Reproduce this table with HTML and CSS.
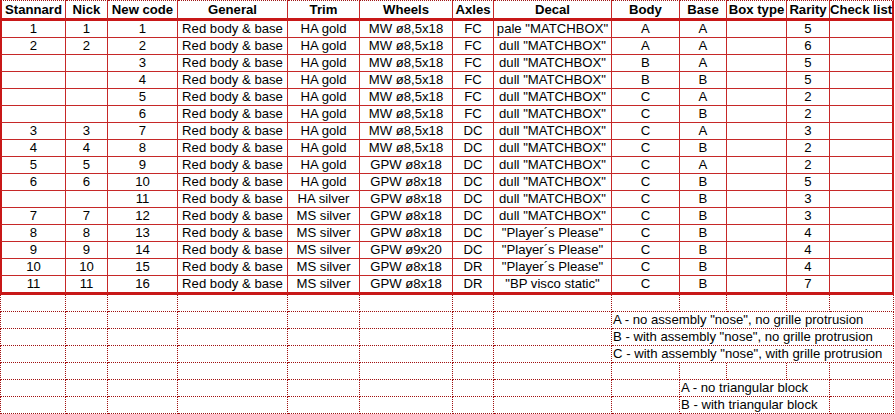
FILE: index.html
```html
<!DOCTYPE html>
<html>
<head>
<meta charset="utf-8">
<link rel="stylesheet" href="styles.css">
</head>
<body>
<table class="sheet">
<colgroup>
<col class="c1"><col class="c2"><col class="c3"><col class="c4"><col class="c5"><col class="c6"><col class="c7"><col class="c8"><col class="c9"><col class="c10"><col class="c11"><col class="c12"><col class="c13">
</colgroup>
<thead>
<tr class="head">
<th>Stannard</th><th>Nick</th><th>New code</th><th>General</th><th>Trim</th><th>Wheels</th><th>Axles</th><th>Decal</th><th>Body</th><th>Base</th><th>Box type</th><th>Rarity</th><th>Check list</th>
</tr>
</thead>
<tbody class="main">
<tr><td>1</td><td>1</td><td>1</td><td>Red body &amp; base</td><td>HA gold</td><td>MW ø8,5x18</td><td>FC</td><td>pale "MATCHBOX"</td><td>A</td><td>A</td><td></td><td>5</td><td></td></tr>
<tr><td>2</td><td>2</td><td>2</td><td>Red body &amp; base</td><td>HA gold</td><td>MW ø8,5x18</td><td>FC</td><td>dull "MATCHBOX"</td><td>A</td><td>A</td><td></td><td>6</td><td></td></tr>
<tr><td></td><td></td><td>3</td><td>Red body &amp; base</td><td>HA gold</td><td>MW ø8,5x18</td><td>FC</td><td>dull "MATCHBOX"</td><td>B</td><td>A</td><td></td><td>5</td><td></td></tr>
<tr><td></td><td></td><td>4</td><td>Red body &amp; base</td><td>HA gold</td><td>MW ø8,5x18</td><td>FC</td><td>dull "MATCHBOX"</td><td>B</td><td>B</td><td></td><td>5</td><td></td></tr>
<tr><td></td><td></td><td>5</td><td>Red body &amp; base</td><td>HA gold</td><td>MW ø8,5x18</td><td>FC</td><td>dull "MATCHBOX"</td><td>C</td><td>A</td><td></td><td>2</td><td></td></tr>
<tr><td></td><td></td><td>6</td><td>Red body &amp; base</td><td>HA gold</td><td>MW ø8,5x18</td><td>FC</td><td>dull "MATCHBOX"</td><td>C</td><td>B</td><td></td><td>2</td><td></td></tr>
<tr><td>3</td><td>3</td><td>7</td><td>Red body &amp; base</td><td>HA gold</td><td>MW ø8,5x18</td><td>DC</td><td>dull "MATCHBOX"</td><td>C</td><td>A</td><td></td><td>3</td><td></td></tr>
<tr><td>4</td><td>4</td><td>8</td><td>Red body &amp; base</td><td>HA gold</td><td>MW ø8,5x18</td><td>DC</td><td>dull "MATCHBOX"</td><td>C</td><td>B</td><td></td><td>2</td><td></td></tr>
<tr><td>5</td><td>5</td><td>9</td><td>Red body &amp; base</td><td>HA gold</td><td>GPW ø8x18</td><td>DC</td><td>dull "MATCHBOX"</td><td>C</td><td>A</td><td></td><td>2</td><td></td></tr>
<tr><td>6</td><td>6</td><td>10</td><td>Red body &amp; base</td><td>HA gold</td><td>GPW ø8x18</td><td>DC</td><td>dull "MATCHBOX"</td><td>C</td><td>B</td><td></td><td>5</td><td></td></tr>
<tr><td></td><td></td><td>11</td><td>Red body &amp; base</td><td>HA silver</td><td>GPW ø8x18</td><td>DC</td><td>dull "MATCHBOX"</td><td>C</td><td>B</td><td></td><td>3</td><td></td></tr>
<tr><td>7</td><td>7</td><td>12</td><td>Red body &amp; base</td><td>MS silver</td><td>GPW ø8x18</td><td>DC</td><td>dull "MATCHBOX"</td><td>C</td><td>B</td><td></td><td>3</td><td></td></tr>
<tr><td>8</td><td>8</td><td>13</td><td>Red body &amp; base</td><td>MS silver</td><td>GPW ø8x18</td><td>DC</td><td>"Player´s Please"</td><td>C</td><td>B</td><td></td><td>4</td><td></td></tr>
<tr><td>9</td><td>9</td><td>14</td><td>Red body &amp; base</td><td>MS silver</td><td>GPW ø9x20</td><td>DC</td><td>"Player´s Please"</td><td>C</td><td>B</td><td></td><td>4</td><td></td></tr>
<tr><td>10</td><td>10</td><td>15</td><td>Red body &amp; base</td><td>MS silver</td><td>GPW ø8x18</td><td>DR</td><td>"Player´s Please"</td><td>C</td><td>B</td><td></td><td>4</td><td></td></tr>
<tr class="last"><td>11</td><td>11</td><td>16</td><td>Red body &amp; base</td><td>MS silver</td><td>GPW ø8x18</td><td>DR</td><td>"BP visco static"</td><td>C</td><td>B</td><td></td><td>7</td><td></td></tr>
</tbody>
<tbody class="extra">
<tr><td></td><td></td><td></td><td></td><td></td><td></td><td></td><td></td><td></td><td></td><td></td><td></td><td></td></tr>
<tr><td></td><td></td><td></td><td></td><td></td><td></td><td></td><td></td><td class="note" colspan="5">A - no assembly "nose", no grille protrusion</td></tr>
<tr><td></td><td></td><td></td><td></td><td></td><td></td><td></td><td></td><td class="note" colspan="5">B - with assembly "nose", no grille protrusion</td></tr>
<tr><td></td><td></td><td></td><td></td><td></td><td></td><td></td><td></td><td class="note" colspan="5">C - with assembly "nose", with grille protrusion</td></tr>
<tr><td></td><td></td><td></td><td></td><td></td><td></td><td></td><td></td><td></td><td></td><td></td><td></td><td></td></tr>
<tr><td></td><td></td><td></td><td></td><td></td><td></td><td></td><td></td><td></td><td class="note" colspan="3">A - no triangular block</td><td></td></tr>
<tr><td></td><td></td><td></td><td></td><td></td><td></td><td></td><td></td><td></td><td class="note" colspan="3">B - with triangular block</td><td></td></tr>
</tbody>
</table>
</body>
</html>
```

FILE: styles.css
```css
html, body {
  margin: 0;
  padding: 0;
  background: #ffffff;
}

body {
  font-family: "Liberation Sans", Arial, sans-serif;
  font-size: 13.15px;
  color: #000000;
}

.sheet {
  border-collapse: separate;
  border-spacing: 0;
  table-layout: fixed;
  width: 894px;
}

.c1 { width: 66px; }
.c2 { width: 42px; }
.c3 { width: 70px; }
.c4 { width: 110px; }
.c5 { width: 72px; }
.c6 { width: 93px; }
.c7 { width: 41px; }
.c8 { width: 118px; }
.c9 { width: 68px; }
.c10 { width: 47px; }
.c11 { width: 60px; }
.c12 { width: 43px; }
.c13 { width: 64px; }

.sheet th,
.sheet td {
  padding: 0;
  text-align: center;
  white-space: nowrap;
  overflow: visible;
  box-sizing: border-box;
}

.head {
  height: 21px;
}

.head th {
  font-weight: bold;
  line-height: 17px;
  border-top: 1px dotted #a01515;
  border-right: 1px solid #c62828;
  border-bottom: 3px solid #c81818;
}

.head th:first-child {
  border-left: 2px solid #c81818;
}

.head th:last-child {
  border-right: 2px solid #c81818;
}

.main tr {
  height: 17px;
}

.main td {
  line-height: 16px;
  border-right: 1px solid #c62828;
  border-bottom: 1px solid #c62828;
}

.main td:first-child {
  border-left: 2px solid #c81818;
}

.main td:last-child {
  border-right: 2px solid #c81818;
}

.main tr.last {
  height: 19px;
}

.main tr.last td {
  border-bottom: 3px solid #c81818;
}

.extra tr {
  height: 17px;
}

.extra td {
  line-height: 16px;
  border-right: 1px dotted #a01010;
  border-bottom: 1px dotted #a01010;
}

.extra td:first-child {
  border-left: 1px dotted #a01010;
}

.extra td.note {
  text-align: left;
  padding-left: 1px;
}
```
